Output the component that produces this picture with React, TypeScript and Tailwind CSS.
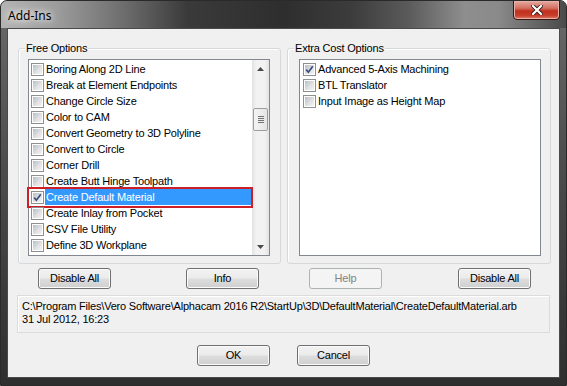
import React from "react";
import { clsx } from "clsx";

const freeOptions = [
  "Boring Along 2D Line",
  "Break at Element Endpoints",
  "Change Circle Size",
  "Color to CAM",
  "Convert Geometry to 3D Polyline",
  "Convert to Circle",
  "Corner Drill",
  "Create Butt Hinge Toolpath",
  "Create Default Material",
  "Create Inlay from Pocket",
  "CSV File Utility",
  "Define 3D Workplane",
];

const extraOptions = [
  { label: "Advanced 5-Axis Machining", checked: true },
  { label: "BTL Translator", checked: false },
  { label: "Input Image as Height Map", checked: false },
];

const CheckBox: React.FC<{ checked?: boolean }> = ({ checked }) => (
  <span className="w-[13px] h-[13px] shrink-0 border border-[#8e8f8f] bg-white p-[1px] flex">
    <span className="relative flex-1 bg-[linear-gradient(135deg,#b9bdc3_0%,#dfe1e3_55%,#f4f4f4_100%)]">
      {checked && (
        <svg
          viewBox="0 0 11 11"
          className="absolute -left-[1px] -top-[1px] w-[11px] h-[11px]"
        >
          <path
            d="M2.2 5.6 L4.4 8.2 L8.8 2.2"
            fill="none"
            stroke="#3b4f7f"
            strokeWidth="1.7"
          />
        </svg>
      )}
    </span>
  </span>
);

const Row: React.FC<{
  label: string;
  checked?: boolean;
  selected?: boolean;
}> = ({ label, checked, selected }) => (
  <div className="relative h-[16px] flex items-center pl-[2px] gap-[1px]">
    <CheckBox checked={checked} />
    <span
      className={clsx(
        "flex-1 h-[16px] pl-[1px] leading-[16px] whitespace-nowrap overflow-hidden",
        selected ? "bg-[#3399ff] text-white" : "text-black"
      )}
    >
      {label}
    </span>
    {selected && (
      <span className="absolute -left-[2px] -right-[1px] -top-[2px] -bottom-[3px] border-2 border-[#cc1f27]" />
    )}
  </div>
);

const Arrow: React.FC<{ up?: boolean }> = ({ up }) => (
  <div className="h-[17px] flex items-center justify-center">
    <svg viewBox="0 0 7 4" className="w-[7px] h-[4px]">
      <polygon
        points={up ? "3.5,0 7,4 0,4" : "0,0 7,0 3.5,4"}
        fill="#4a4a4a"
      />
    </svg>
  </div>
);

const ScrollBar = () => (
  <div className="w-[17px] flex flex-col bg-[linear-gradient(90deg,#e2e2e2_0%,#f2f2f2_25%,#f2f2f2_75%,#e2e2e2_100%)]">
    <Arrow up />
    <div className="flex-1 flex flex-col">
      <div className="h-[31px]" />
      <div className="mx-[1px] h-[23px] rounded-[2px] border border-[#9a9da2] bg-[linear-gradient(90deg,#f4f4f4,#e4e4e4)] flex flex-col items-center justify-center gap-[1px]">
        <span className="w-[6px] h-[1px] bg-[#6f7378]" />
        <span className="w-[6px] h-[1px] bg-[#6f7378]" />
        <span className="w-[6px] h-[1px] bg-[#6f7378]" />
        <span className="w-[6px] h-[1px] bg-[#6f7378]" />
      </div>
    </div>
    <Arrow />
  </div>
);

const Button: React.FC<{
  children: React.ReactNode;
  disabled?: boolean;
  primary?: boolean;
}> = ({ children, disabled, primary }) => (
  <div
    className={clsx(
      "w-[73px] h-[21px] rounded-[3px] border flex items-center justify-center text-[11px] leading-none",
      disabled
        ? "border-[#adb2b5] bg-[#f4f4f4] text-[#838383]"
        : "border-[#707070] text-black bg-[linear-gradient(180deg,#f2f2f2_0%,#ebebeb_48%,#dddddd_52%,#cfcfcf_100%)] shadow-[inset_0_0_0_1px_#fbfbfb]",
      primary && "border-[#3c7fb1] shadow-[inset_0_0_0_1px_#9ad6f3]"
    )}
  >
    {children}
  </div>
);

const GroupBox: React.FC<{
  title: string;
  listLeft: string;
  children: React.ReactNode;
}> = ({ title, listLeft, children }) => (
  <div className="h-[216px] rounded-[3px] border border-[#d5d9dc] shadow-[inset_1px_1px_0_#ffffff] flex flex-col">
    <span className="-mt-[8px] ml-[6px] self-start bg-[#f0f0f0] px-[1px] leading-[14px] text-[11px]">
      {title}
    </span>
    <div
      className={clsx(
        "mt-[4px] w-[242px] h-[197px] border border-[#828790] bg-white flex",
        listLeft
      )}
    >
      {children}
    </div>
  </div>
);

export default function App() {
  return (
    <div
      className="w-[567px] h-[386px] flex flex-col rounded-t-[7px] overflow-hidden border border-[#2a2a2a] bg-[linear-gradient(180deg,#6a6a6a_0%,#4e4e4e_40%,#383838_80%,#2f2f2f_100%)]"
      style={{ fontFamily: '"Liberation Sans", Arial, sans-serif' }}
    >
      {/* title bar */}
      <div className="h-[27px] shrink-0 flex items-start justify-between bg-[linear-gradient(90deg,#b4b4b4_0%,#9c9c9c_10%,#6c6c6c_22%,#3a3a3a_33%,#2e2e2e_50%,#3c3c3c_62%,#5a5a5a_72%,#8e8e8e_82%,#8a8a8a_88%,#5e5e5e_96%,#4a4a4a_100%)]">
        <span
          className="ml-[7px] mt-[6px] text-[12px] text-black [text-shadow:0_0_6px_#ffffff,0_0_10px_#ffffff]"
          style={{ fontFamily: '"Noto Sans", "Open Sans", sans-serif' }}
        >
          Add-Ins
        </span>
        <div className="mr-[6px] -mt-[1px] w-[47px] h-[20px] rounded-b-[4px] border border-[#3a1512] bg-[linear-gradient(180deg,#e3aba2_0%,#d46f60_40%,#c2301e_55%,#c63d2b_80%,#de7c67_100%)] shadow-[inset_0_0_0_1px_#e9b2a8] flex items-center justify-center">
          <svg viewBox="0 0 12 10" className="w-[12px] h-[10px]">
            <path
              d="M2 1 L10 9 M10 1 L2 9"
              stroke="#3b1a16"
              strokeWidth="4"
              strokeLinecap="square"
            />
            <path
              d="M2 1 L10 9 M10 1 L2 9"
              stroke="#ffffff"
              strokeWidth="2.2"
              strokeLinecap="square"
            />
          </svg>
        </div>
      </div>

      <div className="flex flex-1">
        <div className="w-[6px]" />
        {/* client area */}
        <div className="w-[553px] h-[350px] bg-[#f0f0f0] border border-[#4a4a4a] flex flex-col text-[11px] tracking-[-0.2px] text-black">
          <div className="mt-[19px] ml-[10px] flex gap-[6px]">
            <div className="w-[263px] flex flex-col">
              <GroupBox title="Free Options" listLeft="ml-[9px]">
                <div className="flex-1 pt-[1px] flex flex-col">
                  {freeOptions.map((o) => (
                    <Row
                      key={o}
                      label={o}
                      checked={o === "Create Default Material"}
                      selected={o === "Create Default Material"}
                    />
                  ))}
                </div>
                <ScrollBar />
              </GroupBox>
              <div className="mt-[4px] pl-[20px] pr-[22px] flex justify-between">
                <Button>Disable All</Button>
                <Button>Info</Button>
              </div>
            </div>
            <div className="w-[264px] flex flex-col">
              <GroupBox title="Extra Cost Options" listLeft="ml-[11px]">
                <div className="flex-1 pt-[1px] pl-[1px] flex flex-col">
                  {extraOptions.map((o) => (
                    <Row key={o.label} label={o.label} checked={o.checked} />
                  ))}
                </div>
              </GroupBox>
              <div className="mt-[4px] pl-[22px] pr-[20px] flex justify-between">
                <Button disabled>Help</Button>
                <Button>Disable All</Button>
              </div>
            </div>
          </div>

          <div className="mt-[6px] ml-[9px] w-[533px] h-[38px] border border-[#dcdcdc] bg-[#f0f0f0] shadow-[inset_1px_1px_0_#ffffff] pl-[4px] pt-[4px] leading-[13px] whitespace-nowrap">
            <div>
              C:\Program Files\Vero Software\Alphacam 2016
              R2\StartUp\3D\DefaultMaterial\CreateDefaultMaterial.arb
            </div>
            <div>31 Jul 2012, 16:23</div>
          </div>

          <div className="mt-[12px] flex justify-center gap-[27px]">
            <Button primary>OK</Button>
            <Button>Cancel</Button>
          </div>
        </div>
        <div className="w-[6px]" />
      </div>
      <div className="h-[7px] shrink-0" />
    </div>
  );
}
